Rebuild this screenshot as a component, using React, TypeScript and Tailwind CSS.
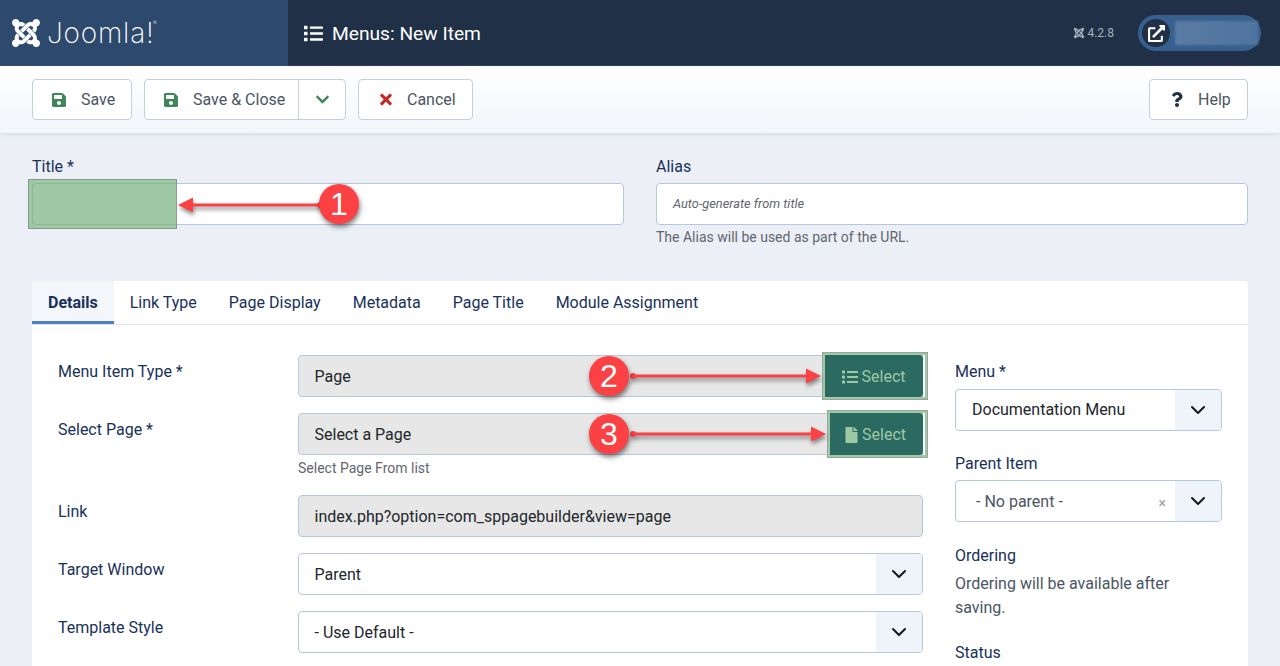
import React from "react";
import { FaJoomla, FaSave, FaTimes, FaChevronDown, FaQuestion, FaExternalLinkAlt, FaFile, FaList } from "react-icons/fa";

const Chev = ({ className = "" }: { className?: string }) => (
  <svg viewBox="0 0 16 16" className={className} fill="none" stroke="currentColor" strokeWidth="2" strokeLinecap="round" strokeLinejoin="round">
    <path d="M2 5l6 6 6-6" />
  </svg>
);

const Btn = ({ icon, label, w, pl }: { icon: React.ReactNode; label: string; w: string; pl: string }) => (
  <button className={`h-[41px] ${w} ${pl} flex items-center gap-[15px] bg-white border border-[#c3cede] rounded text-[16px] text-[#4b5563]`}>
    {icon}
    <span>{label}</span>
  </button>
);

const Label = ({ children }: { children: React.ReactNode }) => (
  <label className="text-[16px] leading-6 text-[#17315a]">{children}</label>
);

const Row = ({ label, children, h }: { label: string; children: React.ReactNode; h: string }) => (
  <div className={`flex ${h}`}>
    <div className="w-[240px] shrink-0 pt-[5px]"><Label>{label}</Label></div>
    <div className="flex-1 min-w-0">{children}</div>
  </div>
);

const ReadOnly = ({ text }: { text: string }) => (
  <div className="flex-1 h-[42px] flex items-center pl-[15.500px] pt-px bg-[#e7e7e7] border border-[#b8c7e0] rounded-l text-[16px] text-[#22262a]">{text}</div>
);

const SelectBtn = ({ icon, w }: { icon: React.ReactNode; w: string }) => (
  <div className={`${w} h-[42px] bg-[#9fc8a5]`}>
    <div className="w-full h-full pt-px flex items-center justify-center gap-[4px] bg-[#2a6a60] rounded-r-[4px] rounded-l-[2px] text-[16px] text-[#9fc8a5]">
      {icon}
      <span>Select</span>
    </div>
  </div>
);

const Sel = ({ text, tone = "text-[#22262a]", clear = false, pl = "pl-[15.500px] pt-px" }: { text: string; tone?: string; clear?: boolean; pl?: string }) => (
  <div className="h-[42px] flex items-stretch bg-white border border-[#b8c7e0] rounded text-[16px] overflow-hidden">
    <div className={`flex-1 flex items-center ${pl} ${tone}`}>
      <span className="flex-1">{text}</span>
      {clear && <span className="mr-[9px] mt-[3px] text-[14px] text-[#9a9da3]">×</span>}
    </div>
    <div className="w-[46px] flex items-center justify-center bg-[#eff4fa] text-[#15181c]">
      <Chev className="w-[16px] h-[16px]" />
    </div>
  </div>
);

const Badge = ({ n, cls }: { n: string; cls: string }) => (
  <div className={`absolute ${cls} w-10 h-10 rounded-full bg-[#fb4143] text-white text-[32px] flex items-center justify-center shadow-[1px_3px_5px_rgba(0,0,0,0.5)] font-['Liberation_Sans',sans-serif]`}>{n}</div>
);

const Arrow = ({ cls, dir, w }: { cls: string; dir: "l" | "r"; w: number }) => (
  <svg className={`absolute ${cls} overflow-visible [filter:drop-shadow(1px_3px_2px_rgba(0,0,0,0.45))]`} width={w} height={16} viewBox={`0 0 ${w} 16`} fill="#fb4143">
    {dir === "l" ? (
      <>
        <path d={`M0 8L15 0.500V6.500H${w}V9.500H15V15.500Z`} />
        <circle cx={w - 1} cy="8" r="3" />
      </>
    ) : (
      <>
        <path d={`M${w} 8L${w - 15} 0.500V6.500H0V9.500H${w - 15}V15.500Z`} />
        <circle cx="1" cy="8" r="3" />
      </>
    )}
  </svg>
);

const Frame = ({ cls }: { cls: string }) => (
  <div className={`absolute ${cls} border border-[#9aa49e] pointer-events-none`}>
    <div className="w-full h-full border-[2px] border-[#9fc8a5]" />
  </div>
);

export default function App() {
  return (
    <div className="relative h-[666px] w-[1280px] overflow-hidden bg-[#ecf0f6] font-['Roboto',sans-serif]">
      <header className="h-[66px] flex bg-[#1f3047] text-white">
        <div className="w-[288px] flex items-center pl-[10px] gap-[5px] bg-[#2d496e]">
          <FaJoomla className="w-[32px] h-[32px]" />
          <span className="relative text-[28px] font-extralight font-['Inter',sans-serif] leading-none tracking-[0.800px]">
            Joomla!<sup className="absolute top-[1px] -right-[3px] text-[6px] leading-none">®</sup>
          </span>
        </div>
        <div className="flex-1 flex items-center pl-4 gap-[9px]">
          <FaList className="w-[19px] h-[19px]" />
          <h1 className="text-[19.200px] pt-[2px] font-normal">Menus: New Item</h1>
        </div>
        <div className="flex items-center pr-[19px]">
          <div className="flex items-center gap-[2px] mr-[24px] text-[12px] text-[#a6b0bf]">
            <FaJoomla className="w-[12px] h-[12px]" />
            <span>4.2.8</span>
          </div>
          <div className="w-[123px] h-9 rounded-full bg-[#37608f] flex items-center pl-[4px]">
            <div className="w-7 h-7 rounded-full bg-[#1f3047] flex items-center justify-center">
              <FaExternalLinkAlt className="w-[17px] h-[17px] text-white" />
            </div>
            <div className="w-[83px] h-[24px] ml-[5px] bg-gradient-to-r from-[#5a7ba3] to-[#4f749f] blur-[1px]" />
          </div>
        </div>
      </header>

      <div className="h-[67px] flex items-center pl-8 pr-8 gap-3 bg-gradient-to-b from-white to-[#f2f5fa] shadow-[0_2px_4px_rgba(200,210,225,0.6)]">
        <Btn w="w-[100px]" pl="pl-[19px]" icon={<FaSave className="w-[14px] h-[16px] text-[#41855a]" />} label="Save" />
        <div className="h-[41px] w-[202px] flex bg-white border border-[#c3cede] rounded text-[16px] text-[#4b5563]">
          <div className="w-[154px] pl-[19px] flex items-center gap-[15px] border-r border-[#c3cede]">
            <FaSave className="w-[14px] h-[16px] text-[#41855a]" />
            <span>Save &amp; Close</span>
          </div>
          <div className="flex-1 flex items-center justify-center text-[#41855a]">
            <FaChevronDown className="w-[15px] h-[15px]" />
          </div>
        </div>
        <Btn w="w-[115px]" pl="pl-[21px]" icon={<FaTimes className="w-[12px] h-[17px] text-[#c52827]" />} label="Cancel" />
        <div className="flex-1" />
        <Btn w="w-[99px]" pl="pl-[21px]" icon={<FaQuestion className="w-[12px] h-[15px] text-[#1f3047]" />} label="Help" />
      </div>

      <main className="px-8 pt-[22px]">
        <div className="flex gap-8 h-[126px]">
          <div className="w-[592px]">
            <Label>Title *</Label>
            <div className="mt-[4px] h-[42px] bg-white border border-[#b8c7e0] rounded" />
          </div>
          <div className="w-[592px]">
            <Label>Alias</Label>
            <div className="mt-[4px] h-[42px] flex items-center pl-4 bg-white border border-[#b8c7e0] rounded italic text-[12.800px] text-[#60656d]">Auto-generate from title</div>
            <p className="mt-[2px] text-[14px] leading-[21px] text-[#5f6670]">The Alias will be used as part of the URL.</p>
          </div>
        </div>

        <div className="bg-white rounded-t h-[400px]">
          <div className="h-[44px] flex border-b border-[#dfe5ef] text-[16px] text-[#17315a]">
            <div className="px-4 pt-[3px] flex items-center font-bold bg-[#f3f6fb] border-b-[3px] border-[#4f7fc0] h-[43px]">Details</div>
            {["Link Type", "Page Display", "Metadata", "Page Title", "Module Assignment"].map((t) => (
              <div key={t} className="px-4 flex items-center h-[43px]">{t}</div>
            ))}
          </div>

          <div className="flex pt-[30px] pl-[26px] pr-[26px]">
            <div className="w-[865px] flex flex-col">
              <Row label="Menu Item Type *" h="h-[58px]">
                <div className="flex"><ReadOnly text="Page" /><SelectBtn w="w-[99px]" icon={<FaList className="w-[16px] h-[16px]" />} /></div>
              </Row>
              <Row label="Select Page *" h="h-[82px]">
                <div className="flex"><ReadOnly text="Select a Page" /><SelectBtn w="w-[95px]" icon={<FaFile className="w-[13px] h-[16px]" />} /></div>
                <p className="mt-[3px] text-[14px] leading-[21px] text-[#5f6670]">Select Page From list</p>
              </Row>
              <Row label="Link" h="h-[58px]">
                <div className="h-[42px] pt-px flex items-center pl-[15.500px] bg-[#e7e7e7] border border-[#b8c7e0] rounded text-[16px] text-[#22262a]">index.php?option=com_sppagebuilder&amp;view=page</div>
              </Row>
              <Row label="Target Window" h="h-[58px]"><Sel text="Parent" /></Row>
              <Row label="Template Style" h="h-[58px]"><Sel text="- Use Default -" /></Row>
            </div>
            <div className="w-[267px] ml-[32px] mt-[5px] flex flex-col">
              <Label>Menu *</Label>
              <div className="mt-[5px]"><Sel text="Documentation Menu" pl="pl-4" /></div>
              <div className="mt-[21px]"><Label>Parent Item</Label></div>
              <div className="mt-[4px]"><Sel text="- No parent -" tone="text-[#4b5563]" clear pl="pl-5 pt-px" /></div>
              <div className="mt-[22px]"><Label>Ordering</Label></div>
              <p className="mt-[4px] text-[16px] leading-6 text-[#4b5563]">Ordering will be available after saving.</p>
              <div className="mt-[21px]"><Label>Status</Label></div>
            </div>
          </div>
        </div>
      </main>

      {/* annotation overlays */}
      <div className="absolute left-[28px] top-[179px] w-[149px] h-[50px] bg-[#9fc8a5] border border-[#8b9a90] pl-[3px] pt-[3px]">
        <div className="w-full h-[42px] border-y border-l border-[#8bb896] rounded-l" />
      </div>
      <Frame cls="left-[822px] top-[352px] w-[106px] h-[48px]" />
      <Frame cls="left-[827px] top-[410px] w-[101px] h-[48px]" />
      <Arrow dir="l" w={143} cls="left-[178px] top-[197px]" />
      <Arrow dir="r" w={189} cls="left-[632px] top-[368px]" />
      <Arrow dir="r" w={194} cls="left-[632px] top-[426px]" />
      <Badge n="1" cls="left-[319px] top-[184px]" />
      <Badge n="2" cls="left-[589px] top-[356px]" />
      <Badge n="3" cls="left-[589px] top-[414px]" />
    </div>
  );
}
